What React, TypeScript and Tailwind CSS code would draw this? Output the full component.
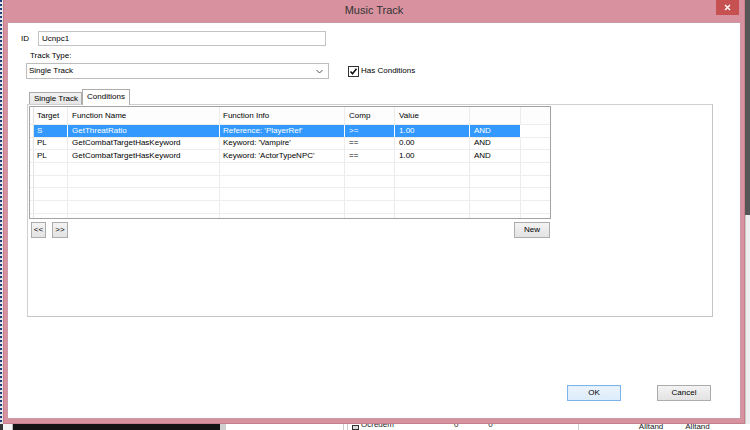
import React from "react";

type Row = { t?: string; fn?: string; fi?: string; c?: string; v?: string; a?: string; sel?: boolean };

const rows: Row[] = [
  { t: "S", fn: "GetThreatRatio", fi: "Reference: 'PlayerRef'", c: ">=", v: "1.00", a: "AND", sel: true },
  { t: "PL", fn: "GetCombatTargetHasKeyword", fi: "Keyword: 'Vampire'", c: "==", v: "0.00", a: "AND" },
  { t: "PL", fn: "GetCombatTargetHasKeyword", fi: "Keyword: 'ActorTypeNPC'", c: "==", v: "1.00", a: "AND" },
  {},
  {},
  {},
  {},
  {},
];

const cols: { k: keyof Row; w: string; pl: string; h: string }[] = [
  { k: "t", w: "w-[34px]", pl: "pl-[3px]", h: "Target" },
  { k: "fn", w: "w-[152px]", pl: "pl-[4px]", h: "Function Name" },
  { k: "fi", w: "w-[125px]", pl: "pl-[3px]", h: "Function Info" },
  { k: "c", w: "w-[50px]", pl: "pl-[4px]", h: "Comp" },
  { k: "v", w: "w-[75px]", pl: "pl-[4px]", h: "Value" },
  { k: "a", w: "w-[51px]", pl: "pl-[4px]", h: "" },
];

function WinButton({ children, className = "" }: { children: React.ReactNode; className?: string }) {
  return (
    <div
      className={`flex items-center justify-center h-[16px] border border-[#acacac] bg-gradient-to-b from-[#f3f3f3] to-[#e3e3e3] text-[8px] leading-none text-black ${className}`}
    >
      {children}
    </div>
  );
}

export default function App() {
  return (
    <div className="relative w-[750px] h-[430px] overflow-hidden bg-white font-['Liberation_Sans',Arial,sans-serif] text-[8px] leading-none text-black">
      {/* desktop / background application behind the dialog */}
      <div className="absolute left-0 top-0 w-[3px] h-[430px] bg-[#e4e4e4] border-l-2 border-dotted border-[#203c7a]" />
      <div className="absolute right-0 top-0 w-[5px] h-[430px] flex flex-col">
        <div className="h-[215px] bg-[#565656]" />
        <div className="flex-1 bg-[#eeeeee] border-l border-[#c8c8c8]" />
      </div>
      <div className="absolute left-0 bottom-0 w-[750px] h-[6px] flex items-start bg-white">
        <div className="w-[3px] h-full bg-[#333]" />
        <div className="w-[10px] h-full bg-[#f4f4f4] border-r border-[#bbb]" />
        <div className="w-[207px] h-full bg-[#141414]" />
        <div className="w-[6px] h-full bg-[#d0d0d0]" />
        <div className="w-[118px] h-full bg-white border-r border-[#ccc]" />
        <div className="w-[4px] h-full border-r border-[#ccc]" />
        <div className="ml-[4px] mt-[1px] w-[7px] h-[5px] border border-[#333] bg-[#ddd]" />
        <span className="ml-[2px] -mt-[3px] text-[8px] text-[#222]">Ocredem</span>
        <span className="ml-[60px] -mt-[3px] text-[8px] text-[#222]">0</span>
        <span className="ml-[30px] -mt-[3px] text-[8px] text-[#222]">0</span>
        <div className="ml-[85px] w-[1px] h-full bg-[#ccc]" />
        <span className="ml-[60px] -mt-[1px] text-[8px] text-[#222]">Alltand</span>
        <span className="ml-[22px] -mt-[1px] text-[8px] text-[#222]">Alltand</span>
      </div>

      {/* dialog window */}
      <div className="absolute left-[3px] top-0 w-[742px] h-[424px] bg-[#d8929f] border-x border-b border-[#c47f8d] flex flex-col px-[3px] pb-[4px]">
        {/* title bar */}
        <div className="relative h-[22px] flex items-center justify-center">
          <span className="text-[11px] text-[#333] -mt-[1px]">Music Track</span>
          <div className="absolute right-[2px] top-0 w-[23px] h-[15px] bg-[#c75050] flex items-center justify-center">
            <svg width="7" height="7" viewBox="0 0 7 7">
              <path d="M1 1 L6 6 M6 1 L1 6" stroke="#fff" strokeWidth="1.4" />
            </svg>
          </div>
        </div>

        {/* client area */}
        <div className="flex-1 bg-white border border-[#c99aa5] flex flex-col">
          {/* ID row */}
          <div className="flex items-center h-[15px] mt-[8px]">
            <span className="ml-[13px] w-[17px]">ID</span>
            <div className="w-[288px] h-[15px] border border-[#c3c3c3] flex items-center px-[3px]">Ucnpc1</div>
          </div>

          {/* Track type */}
          <div className="ml-[22px] mt-[5px] h-[10px] flex items-center">Track Type:</div>
          <div className="flex items-center mt-[2px] h-[16px]">
            <div className="ml-[18px] w-[303px] h-[16px] border border-[#bdbdbd] flex items-center pl-[2px] pr-[5px]">
              <span className="flex-1">Single Track</span>
              <svg width="7" height="5" viewBox="0 0 7 5">
                <path d="M0.5 1 L3.5 4 L6.5 1" stroke="#555" strokeWidth="1" fill="none" />
              </svg>
            </div>
            <div className="ml-[19px] w-[11px] h-[11px] border border-[#333] bg-white flex items-center justify-center">
              <svg width="9" height="9" viewBox="0 0 9 9">
                <path d="M1.5 4.5 L3.5 6.8 L7.5 1.8" stroke="#111" strokeWidth="1.6" fill="none" />
              </svg>
            </div>
            <span className="ml-[2px]">Has Conditions</span>
          </div>

          {/* tabs */}
          <div className="flex items-end h-[15px] mt-[10px] ml-[21px] relative z-10">
            <div className="w-[53px] h-[12px] border border-b-0 border-[#acacac] bg-gradient-to-b from-[#f2f2f2] to-[#e6e6e6] flex items-center pl-[4px]">
              Single Track
            </div>
            <div className="w-[48px] h-[16px] -mb-[1px] border border-b-0 border-[#acacac] bg-white flex items-center justify-center pb-[2px]">
              Conditions
            </div>
          </div>

          {/* tab panel */}
          <div className="ml-[19px] w-[686px] h-[213px] border border-[#cfcfcf] border-r-[#c4c4c4] border-b-[#c4c4c4] bg-white pl-[1px] pt-[1px]">
            <div className="w-[522px]">
              {/* grid */}
              <div className="h-[113px] border border-[#a3a3a3] overflow-hidden bg-white">
                <div className="flex h-[18px] border-b border-[#ededed] bg-[#fdfdfd]">
                  <div className="w-[4px] h-full border-r border-[#e2e2e2]" />
                  {cols.map((c) => (
                    <div key={c.k} className={`${c.w} ${c.pl} h-full flex items-center border-r border-[#ececec]`}>
                      {c.h}
                    </div>
                  ))}
                  <div className="flex-1" />
                </div>
                {rows.map((r, i) => (
                  <div key={i} className="flex h-[12.67px] border-b border-[#eeeeee]">
                    <div className="w-[4px] h-full border-r border-[#e2e2e2]" />
                    {cols.map((c) => (
                      <div
                        key={c.k}
                        className={`${c.w} ${c.pl} h-full flex items-center whitespace-nowrap border-r ${
                          r.sel ? "bg-[#3399ff] text-white border-white" : "border-[#ececec]"
                        }`}
                      >
                        {(r[c.k] as string) || ""}
                      </div>
                    ))}
                    <div className="flex-1" />
                  </div>
                ))}
              </div>

              {/* grid buttons */}
              <div className="flex items-center mt-[3px] h-[16px]">
                <WinButton className="ml-[2px] w-[15px] text-[#555]">&lt;&lt;</WinButton>
                <WinButton className="ml-[6px] w-[16px] text-[#555]">&gt;&gt;</WinButton>
                <WinButton className="ml-auto mr-[1px] w-[36px]">New</WinButton>
              </div>
            </div>
          </div>

          {/* dialog buttons */}
          <div className="mt-auto mb-[17px] flex justify-end h-[16px] pr-[29px]">
            <div className="w-[54px] h-[16px] border border-[#7eb4ea] bg-gradient-to-b from-[#ecf4fc] to-[#dcecfc] flex items-center justify-center">
              <div className="w-[52px] h-[14px] border border-[#e0eefb] flex items-center justify-center">OK</div>
            </div>
            <WinButton className="ml-[36px] w-[54px]">Cancel</WinButton>
          </div>
        </div>
      </div>
    </div>
  );
}
